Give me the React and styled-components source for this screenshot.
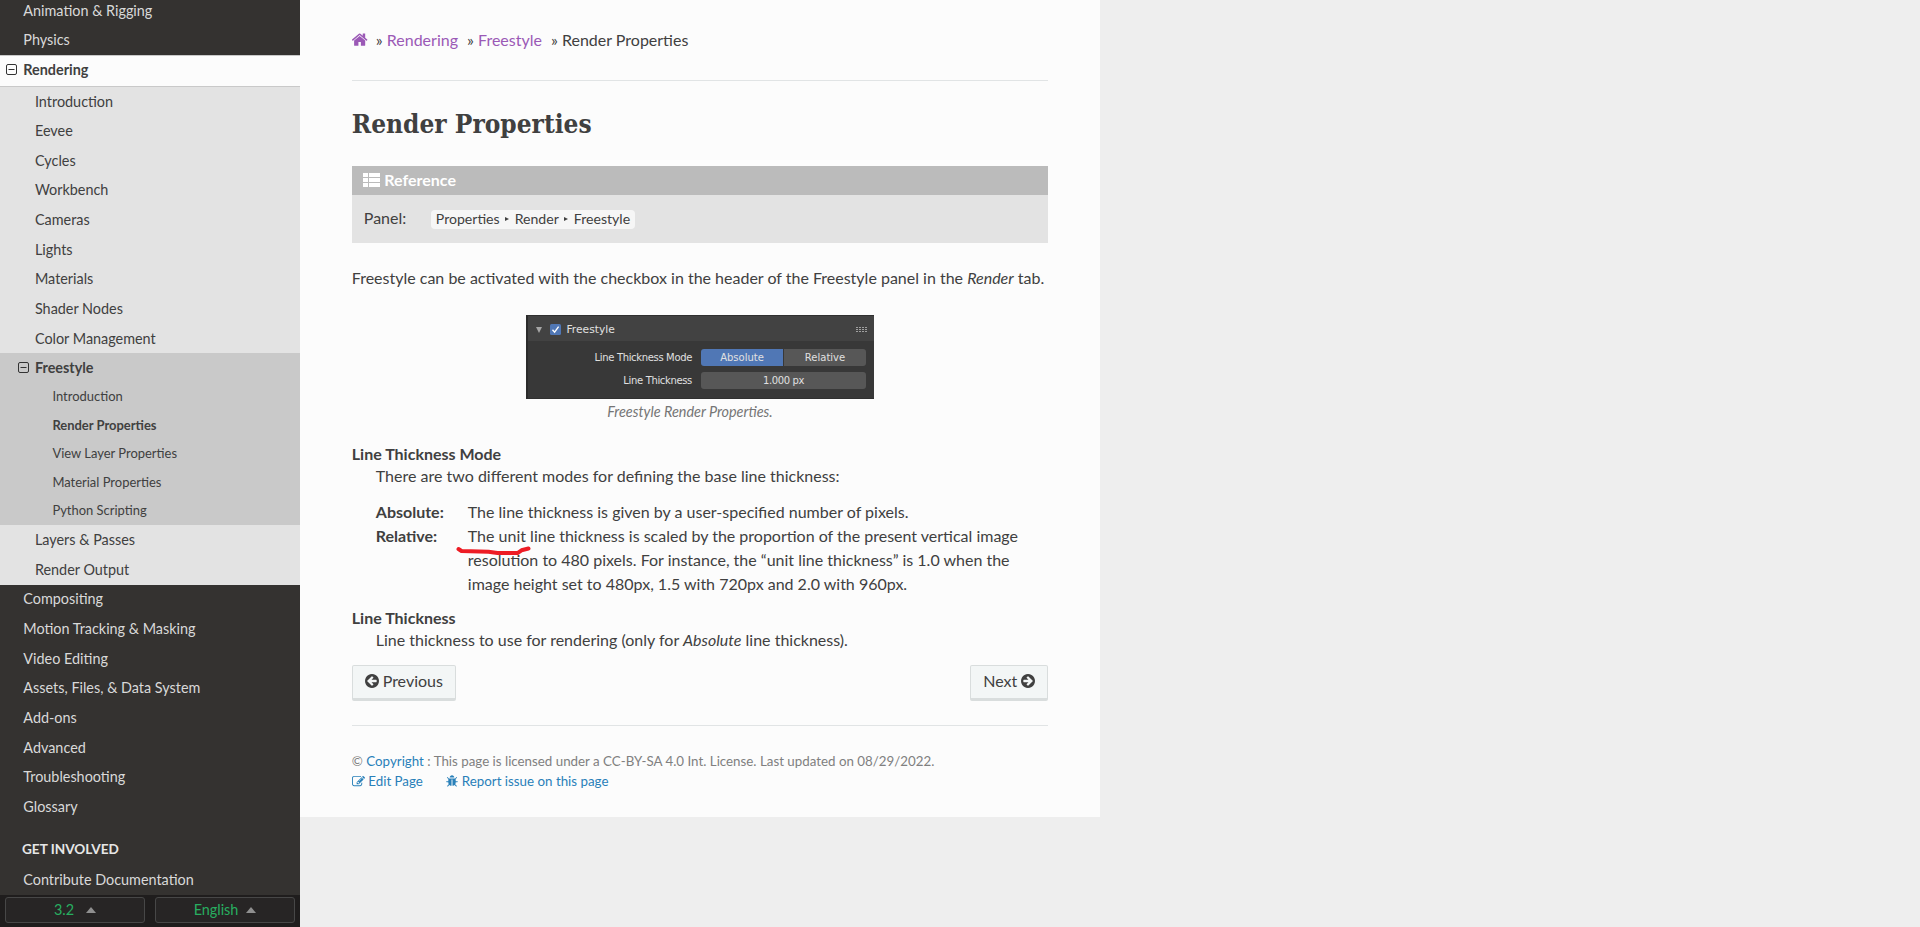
import React from "react";
import styled, { createGlobalStyle, css } from "styled-components";

const GlobalStyle = createGlobalStyle`
  *, *::before, *::after { box-sizing: border-box; }
  html, body { margin: 0; height: 100%; overflow: hidden; }
  body {
    background: #eeeeee;
    color: #404040;
    font-family: Lato, "Liberation Sans", sans-serif;
    font-size: 16px;
    line-height: 24px;
  }
`;

const Page = styled.div`
  display: flex;
  align-items: flex-start;
  height: 927px;
  overflow: hidden;
`;

/* ---------- sidebar ---------- */

const Sidebar = styled.nav`
  display: flex;
  flex-direction: column;
  flex: 0 0 300px;
  height: 927px;
  background: #343230;
  overflow: hidden;
`;

const NavScroll = styled.div`
  flex: 1 1 0;
  min-height: 0;
  overflow: hidden;
`;

const NavTree = styled.div`
  margin-top: -4.1px;
`;

const indents = { 1: "23.3px", 2: "34.95px", 3: "52.42px" };

const NavItem = styled.a`
  display: flex;
  align-items: center;
  gap: 6px;
  font-size: ${(p) => (p.$level === 3 ? "12.96px" : "14.4px")};
  line-height: 18px;
  padding: ${(p) => (p.$level === 3 ? "0.32em 1.618em 0.489em" : "0.4045em 1.618em")};
  padding-left: ${(p) => indents[p.$level]};
  color: ${(p) => (p.$level === 1 ? "#d9d9d9" : "#404040")};
  font-weight: ${(p) => (p.$bold ? 700 : 400)};
  ${(p) =>
    p.$current &&
    css`
      padding-top: 5.3px;
      padding-bottom: 6.3px;
      background: #fcfcfc;
      color: #404040;
      border-top: 1px solid #c9c9c9;
      border-bottom: 1px solid #c9c9c9;
    `}
`;

const Collapse = styled.svg`
  width: 11px;
  height: 11px;
  margin-left: -17px;
  margin-top: -1px;
  flex: none;
`;

const NavGroup = styled.div`
  background: ${(p) => p.$tone};
`;

const NavCaption = styled.p`
  margin: 11.5px 0 0;
  padding: 0 1.618em;
  height: 32px;
  font-size: 13.6px;
  line-height: 32px;
  font-weight: 700;
  text-transform: uppercase;
  white-space: nowrap;
  color: #e6e6e6;
`;

const VersionBar = styled.div`
  display: flex;
  gap: 10px;
  flex: 0 0 32px;
  padding: 2px 5px 4px;
  background: #1f1d1d;
`;

const VersionButton = styled.div`
  flex: 1;
  display: flex;
  align-items: center;
  justify-content: center;
  gap: ${(p) => p.$gap};
  height: 26px;
  border: 1px solid #474747;
  border-radius: 3px;
  background: #272525;
  color: #27ae60;
  font-size: 14.4px;
`;

const Caret = styled.span`
  border: 5px solid transparent;
  border-top: 0;
  border-bottom: 6px solid #8f8f8f;
`;

/* ---------- document ---------- */

const Document = styled.main`
  position: relative;
  width: 800px;
  height: 817px;
  padding: 28px 51.8px 0;
  background: #fcfcfc;
`;

const Breadcrumbs = styled.div`
  display: flex;
  height: 24px;
  white-space: pre;
`;

const Crumb = styled.span`
  margin-right: 9.1px;
`;

const HomeLink = styled.a`
  display: flex;
  align-items: center;
  margin-right: 8px;
  padding-bottom: 1px;
  color: #9b59b6;
`;

const Link = styled.a`
  color: ${(p) => (p.$visited ? "#9b59b6" : "#2980b9")};
`;

const Rule = styled.hr`
  height: 1px;
  border: 0;
  margin: ${(p) => p.$margin};
  background: #e1e4e5;
`;

const Title = styled.h1`
  margin: 0 0 23px;
  height: 38px;
  line-height: 38px;
  font-family: "Roboto Slab", "DejaVu Serif Condensed", "DejaVu Serif", serif;
  font-stretch: condensed;
  font-size: 26px;
  font-weight: 700;
  white-space: nowrap;
`;

const Admonition = styled.section`
  background: #e3e3e3;
`;

const AdmonitionTitle = styled.div`
  display: flex;
  align-items: center;
  gap: 4px;
  height: 29px;
  padding-left: 11.5px;
  padding-bottom: 2px;
  background: #bbbbbb;
  color: #ffffff;
  font-weight: 700;
`;

const AdmonitionBody = styled.div`
  display: flex;
  align-items: center;
  height: 48px;
  padding-left: 12px;
`;

const FieldName = styled.span`
  width: 67px;
  padding-bottom: 2px;
`;

const MenuPath = styled.span`
  display: flex;
  align-items: center;
  height: 19px;
  padding: 0 5px;
  border-radius: 4px;
  background: #f6f6f6;
  font-size: 14.1px;
`;

const PathArrow = styled.span`
  margin: 0 6px 0 5px;
  border: 2px solid transparent;
  border-left: 4px solid #404040;
  border-right: 0;
`;

const Paragraph = styled.p`
  margin: ${(p) => p.$margin || 0};
  white-space: nowrap;
`;

const Figure = styled.figure`
  display: flex;
  flex-direction: column;
  align-items: center;
  margin: 0;
`;

const Caption = styled.figcaption`
  width: 100%;
  padding-right: 20px;
  text-align: center;
  font-size: 14.4px;
  font-style: italic;
  line-height: 25px;
  color: #757575;
`;

/* Blender panel shown in the figure */

const Panel = styled.div`
  width: 348px;
  height: 84px;
  background: #383838;
  border-top: 1px solid #303030;
  border-left: 2px solid #2b2b2b;
  border-bottom: 1px solid #303030;
  color: #e0e0e0;
  font-family: "DejaVu Sans", sans-serif;
  font-size: 10px;
  line-height: 17px;
`;

const PanelHeader = styled.div`
  display: flex;
  align-items: center;
  height: 25px;
  padding: 2px 7px 0 8px;
  background: #424242;
  font-size: 10.7px;
`;

const PanelToggle = styled.span`
  border: 3px solid transparent;
  border-top: 6px solid #a5a5a5;
  border-bottom: 0;
`;

const Checkbox = styled.svg`
  width: 11px;
  height: 11px;
  margin: 0 5.5px 0 8px;
`;

const Grip = styled.svg`
  width: 11px;
  height: 6px;
  margin-left: auto;
`;

const PanelRow = styled.div`
  display: grid;
  grid-template-columns: 164px 165px;
  column-gap: 9px;
  margin-top: ${(p) => p.$top};
  height: 18px;
  text-align: right;
`;

const PanelLabel = styled.span`
  letter-spacing: -0.34px;
`;

const Control = styled.div`
  display: flex;
  height: 17px;
  gap: 1px;
  border-radius: 3px;
  overflow: hidden;
  text-align: center;
`;

const Segment = styled.span`
  flex: 1;
  background: ${(p) => (p.$on ? "#5077b5" : "#575757")};
  letter-spacing: ${(p) => (p.$tight ? "-0.4px" : "normal")};
`;

/* definition lists */

const Term = styled.div`
  font-weight: 700;
  line-height: 24px;
  margin-top: ${(p) => p.$top};
`;

const Definition = styled.div`
  margin-left: 24px;
  margin-top: -2px;
  white-space: nowrap;
`;

const Fields = styled.div`
  display: grid;
  grid-template-columns: 92px 1fr;
  margin-top: 12px;
`;

const FieldTerm = styled.span`
  font-weight: 700;
`;

const Markup = styled.svg`
  position: absolute;
  left: 155px;
  top: 544px;
  width: 78px;
  height: 14px;
`;

const Pager = styled.div`
  display: flex;
  justify-content: space-between;
  margin-top: 13px;
`;

const PagerButton = styled.a`
  display: flex;
  align-items: center;
  justify-content: center;
  gap: 4px;
  width: ${(p) => p.$width};
  height: 36px;
  padding-bottom: 2px;
  border: 1px solid #d9dddd;
  border-bottom-width: 3px;
  border-radius: 2px;
  background: #f3f6f6;
`;

const Footer = styled.footer`
  color: #808080;
  font-size: 13.33px;
  line-height: 20px;
  white-space: pre;
`;

const FooterLinks = styled.div`
  display: flex;
  gap: 23.5px;
`;

const FooterLink = styled(Link)`
  display: flex;
  align-items: center;
  gap: 3.5px;
`;

const Glyph = styled.svg`
  width: ${(p) => p.$size}px;
  height: ${(p) => p.$size}px;
  flex: none;
  fill: currentColor;
`;

const paths = {
  home: "M1472 992v480q0 26-19 45t-45 19h-384v-384h-256v384h-384q-26 0-45-19t-19-45v-480q0-1 .5-3t.5-3l575-474 575 474q1 2 1 6zm223-69l-62 74q-8 9-21 11h-3q-13 0-21-7l-692-577-692 577q-12 8-24 7-13-2-21-11l-62-74q-8-10-7-23.5t11-21.5l719-599q32-26 76-26t76 26l244 204v-195q0-14 9-23t23-9h192q14 0 23 9t9 23v408l219 182q10 8 11 21.5t-7 23.5z",
  arrow: "M1408 960v-128q0-26-19-45t-45-19h-502l189-189q19-19 19-45t-19-45l-91-91q-18-18-45-18t-45 18l-362 362-91 91q-18 18-18 45t18 45l91 91 362 362q18 18 45 18t45-18l91-91q18-18 18-45t-18-45l-189-189h502q26 0 45-19t19-45zm256-64q0 209-103 385.5t-279.5 279.5-385.5 103-385.5-103-279.5-279.5-103-385.5 103-385.5 279.5-279.5 385.5-103 385.5 103 279.5 279.5 103 385.5z",
  edit: "M888 1184l116-116-152-152-116 116v56h96v96h56zm440-720q-16-16-33 1l-350 350q-17 17-1 33t33-1l350-350q17-17 1-33zm80 594v190q0 119-84.5 203.5t-203.5 84.5h-832q-119 0-203.5-84.5t-84.5-203.5v-832q0-119 84.5-203.5t203.5-84.5h832q63 0 117 25 15 7 18 23 3 17-9 29l-49 49q-14 14-32 8-23-6-45-6h-832q-66 0-113 47t-47 113v832q0 66 47 113t113 47h832q66 0 113-47t47-113v-126q0-13 9-22l64-64q15-15 35-7t20 29zm-96-738l288 288-672 672h-288v-288zm444 132l-92 92-288-288 92-92q28-28 68-28t68 28l152 152q28 28 28 68t-28 68z",
  bug: "M1696 960q0 26-19 45t-45 19h-224q0 171-67 290l208 209q19 19 19 45t-19 45q-18 19-45 19t-45-19l-198-197q-5 5-15 13t-42 28.5-65 36.5-82 29-97 13v-896h-128v896q-51 0-101.5-13.5t-87-33-66-39-43.5-32.5l-15-14-183 207q-20 21-48 21-24 0-43-16-19-18-20.5-44.5t15.5-46.5l202-227q-58-114-58-274h-224q-26 0-45-19t-19-45 19-45 45-19h224v-294l-173-173q-19-19-19-45t19-45 45-19 45 19l173 173h844l173-173q19-19 45-19t45 19 19 45-19 45l-173 173v294h224q26 0 45 19t19 45zm-480-576h-640q0-133 93.5-226.5t226.5-93.5 226.5 93.5 93.5 226.5z",
};

const Icon = ({ name, size = 16, box = "0 0 1792 1792", flip }) => (
  <Glyph $size={size} viewBox={box}>
    <path d={paths[name]} transform={flip ? "translate(1792 0) scale(-1 1)" : undefined} />
  </Glyph>
);

const ListIcon = styled.svg`
  width: 17px;
  height: 14px;
  fill: #ffffff;
`;

const Toggle = () => (
  <Collapse viewBox="0 0 11 11" fill="none" stroke="#333333">
    <rect x="0.5" y="0.5" width="10" height="10" rx="1.5" />
    <path d="M2.5 5.5h6" />
  </Collapse>
);

const renderingPages = ["Introduction", "Eevee", "Cycles", "Workbench", "Cameras", "Lights", "Materials", "Shader Nodes", "Color Management"];
const freestylePages = ["Introduction", "Render Properties", "View Layer Properties", "Material Properties", "Python Scripting"];
const laterSections = ["Compositing", "Motion Tracking & Masking", "Video Editing", "Assets, Files, & Data System", "Add-ons", "Advanced", "Troubleshooting", "Glossary"];

const Items = ({ names, level, bold }) =>
  names.map((name) => (
    <NavItem key={name} $level={level} $bold={name === bold}>
      {name}
    </NavItem>
  ));

const SideNav = () => (
  <Sidebar>
    <NavScroll>
      <NavTree>
        <Items names={["Animation & Rigging", "Physics"]} level={1} />
        <NavItem $level={1} $bold $current>
          <Toggle />
          Rendering
        </NavItem>
        <NavGroup $tone="#e3e3e3">
          <Items names={renderingPages} level={2} />
          <NavGroup $tone="#c9c9c9">
            <NavItem $level={2} $bold>
              <Toggle />
              Freestyle
            </NavItem>
            <Items names={freestylePages} level={3} bold="Render Properties" />
          </NavGroup>
          <Items names={["Layers & Passes", "Render Output"]} level={2} />
        </NavGroup>
        <Items names={laterSections} level={1} />
        <NavCaption>Get Involved</NavCaption>
        <NavItem $level={1}>Contribute Documentation</NavItem>
      </NavTree>
    </NavScroll>
    <VersionBar>
      <VersionButton $gap="12px">
        3.2 <Caret />
      </VersionButton>
      <VersionButton $gap="8px">
        English <Caret />
      </VersionButton>
    </VersionBar>
  </Sidebar>
);

const FreestylePanel = () => (
  <Panel>
    <PanelHeader>
      <PanelToggle />
      <Checkbox viewBox="0 0 11 11">
        <rect width="11" height="11" rx="1.5" fill="#5077b5" />
        <path d="M2.5 5.8l2.1 2.3 4-5.4" fill="none" stroke="#ffffff" strokeWidth="1.4" />
      </Checkbox>
      Freestyle
      <Grip viewBox="0 0 11 6" stroke="#a0a0a0" strokeWidth="1" strokeDasharray="2 1">
        <path d="M0 .5h11M0 2.5h11M0 4.5h11" />
      </Grip>
    </PanelHeader>
    <PanelRow $top="8px">
      <PanelLabel>Line Thickness Mode</PanelLabel>
      <Control>
        <Segment $on>Absolute</Segment>
        <Segment>Relative</Segment>
      </Control>
    </PanelRow>
    <PanelRow $top="5px">
      <PanelLabel>Line Thickness</PanelLabel>
      <Control>
        <Segment $tight>1.000 px</Segment>
      </Control>
    </PanelRow>
  </Panel>
);

export default function App() {
  return (
    <Page>
      <GlobalStyle />
      <SideNav />
      <Document>
        <Breadcrumbs>
          <HomeLink>
            <Icon name="home" size={16} box="100 100 1664 1664" />
          </HomeLink>
          <Crumb>» <Link $visited>Rendering</Link></Crumb>
          <Crumb>» <Link $visited>Freestyle</Link></Crumb>
          <Crumb>» Render Properties</Crumb>
        </Breadcrumbs>
        <Rule $margin="28px 0 24px" />
        <Title>Render Properties</Title>
        <Admonition>
          <AdmonitionTitle>
            <ListIcon viewBox="0 0 17 14">
              <path d="M0 0h5v4H0zM6 0h11v4H6zM0 5h5v4H0zM6 5h11v4H6zM0 10h5v4H0zM6 10h11v4H6z" />
            </ListIcon>
            Reference
          </AdmonitionTitle>
          <AdmonitionBody>
            <FieldName>Panel:</FieldName>
            <MenuPath>
              Properties
              <PathArrow />
              Render
              <PathArrow />
              Freestyle
            </MenuPath>
          </AdmonitionBody>
        </Admonition>
        <Paragraph $margin="23px 0 25px">
          Freestyle can be activated with the checkbox in the header of the Freestyle panel in the <em>Render</em> tab.
        </Paragraph>
        <Figure>
          <FreestylePanel />
          <Caption>Freestyle Render Properties.</Caption>
        </Figure>
        <Term $top="18px">Line Thickness Mode</Term>
        <Definition>
          There are two different modes for defining the base line thickness:
          <Fields>
            <FieldTerm>Absolute:</FieldTerm>
            <span>The line thickness is given by a user-specified number of pixels.</span>
            <FieldTerm>Relative:</FieldTerm>
            <span>
              The unit line thickness is scaled by the proportion of the present vertical image
              <br />
              resolution to 480 pixels. For instance, the “unit line thickness” is 1.0 when the
              <br />
              image height set to 480px, 1.5 with 720px and 2.0 with 960px.
            </span>
          </Fields>
        </Definition>
        <Term $top="10px">Line Thickness</Term>
        <Definition>
          Line thickness to use for rendering (only for <em>Absolute</em> line thickness).
        </Definition>
        <Pager>
          <PagerButton $width="104px">
            <Icon name="arrow" size={14} box="128 128 1536 1536" />
            Previous
          </PagerButton>
          <PagerButton $width="78px">
            Next
            <Icon name="arrow" size={14} box="128 128 1536 1536" flip />
          </PagerButton>
        </Pager>
        <Rule $margin="24px 0 25px" />
        <Footer>
          <div>© <Link>Copyright</Link> : This page is licensed under a CC-BY-SA 4.0 Int. License. Last updated on 08/29/2022.</div>
          <FooterLinks>
            <FooterLink>
              <Icon name="edit" size={13} box="0 0 1792 1792" />
              Edit Page
            </FooterLink>
            <FooterLink>
              <Icon name="bug" size={12} box="64 32 1664 1664" />
              Report issue on this page
            </FooterLink>
          </FooterLinks>
        </Footer>
        <Markup viewBox="0 0 78 14" fill="none" stroke="#ed1c24" strokeLinecap="round" strokeLinejoin="round">
          <path d="M3.5 5l3 2 27 .8 9 1.3h20l4-2.8 7-1.8" strokeWidth="4" />
        </Markup>
      </Document>
    </Page>
  );
}
